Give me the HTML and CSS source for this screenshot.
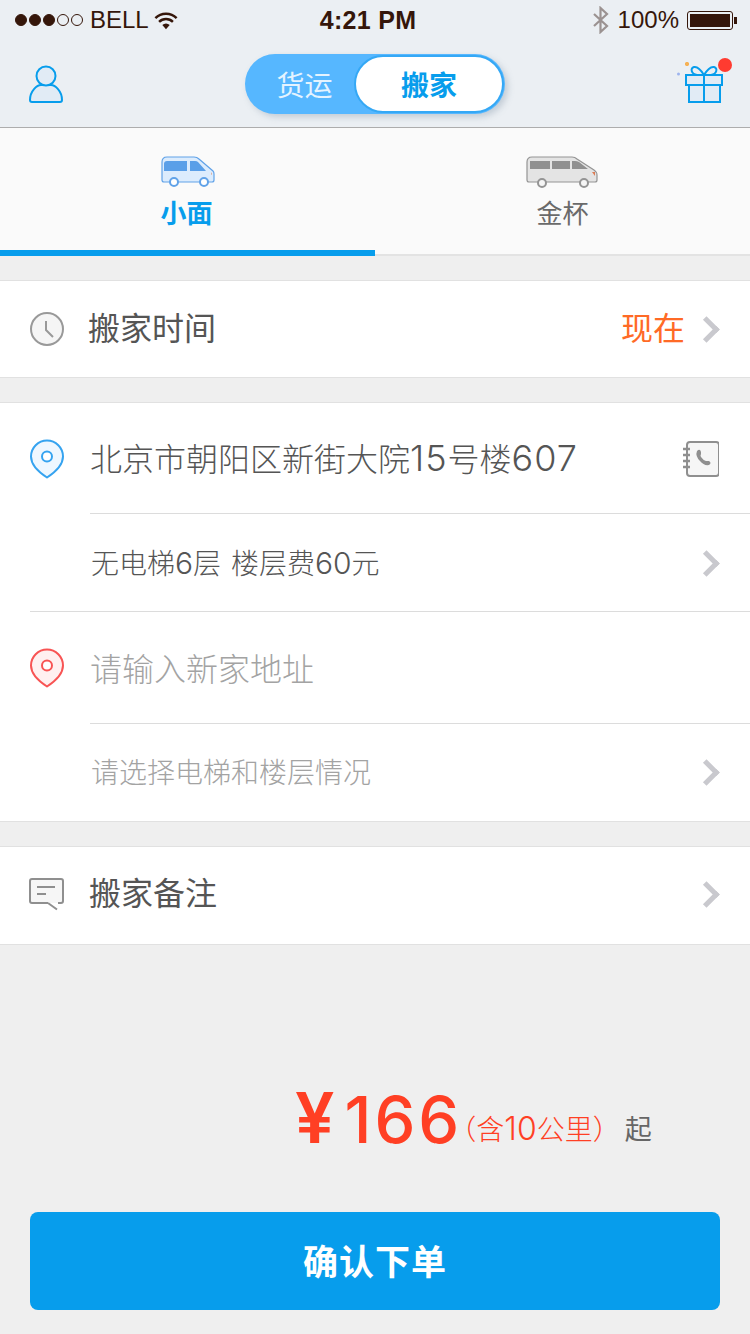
FILE: index.html
```html
<!DOCTYPE html>
<html lang="zh-CN">
<head>
    <meta charset="UTF-8">
    <meta name="viewport" content="width=device-width, initial-scale=1.0">
    <title>搬家</title>
    <link rel="stylesheet" href="styles.css">
</head>
<body>

    <div class="status-bar">
        <div class="status-left">
            <span class="signal">
                <i class="dot on"></i><i class="dot on"></i><i class="dot on"></i><i class="dot"></i><i class="dot"></i>
            </span>
            <span>BELL</span>
            <svg class="wifi" width="24" height="19" viewBox="0 0 26 20">
                <path d="M1.500 7.500a16 16 0 0 1 23 0" fill="none" stroke="#35160a" stroke-width="2.600"/>
                <path d="M5.500 11.500a10.500 10.500 0 0 1 15 0" fill="none" stroke="#35160a" stroke-width="2.600"/>
                <path d="M9 15a5.500 5.500 0 0 1 8 0l-4 4.500z" fill="#35160a"/>
            </svg>
        </div>
        <div class="status-time">4:21 PM</div>
        <div class="status-right">
            <svg width="18" height="28" viewBox="0 0 18 28">
                <path d="M2 8l13 12-6.500 6V2L15 8 2 20" fill="none" stroke="#9b9291" stroke-width="2.200"/>
            </svg>
            <span>100%</span>
            <span class="battery"><i class="battery-fill"></i></span>
        </div>
    </div>

    <div class="nav">
        <svg width="36" height="40" viewBox="0 0 36 40">
            <path d="M4 38q-2 0-2-2c0-9 7-15 11-15h10c4 0 11 6 11 15q0 2-2 2z" fill="#e1ebf5" stroke="#079dec" stroke-width="2" stroke-linejoin="round"/>
            <circle cx="18" cy="12" r="9.500" fill="#e1ebf5" stroke="#079dec" stroke-width="2"/>
        </svg>
        <div class="switch">
            <span class="switch-off">货运</span>
            <span class="switch-on">搬家</span>
        </div>
        <div class="gift">
            <svg width="50" height="50" viewBox="0 0 50 50">
                <path d="M10 7h4M12 5v4" stroke="#f5b155" stroke-width="2.500"/>
                <circle cx="3.500" cy="17" r="1.500" fill="#9db4ee"/>
                <path d="M22 18c-6-1-7-7-3-8 3-.6 7 3 10 8 3-5 7-8.600 10-8 4 1 3 7-3 8" fill="none" stroke="#079dec" stroke-width="2"/>
                <rect x="11" y="18" width="36" height="10" fill="#e1ebf5" stroke="#079dec" stroke-width="2"/>
                <rect x="14" y="28" width="31" height="17" fill="#e1ebf5" stroke="#079dec" stroke-width="2"/>
                <path d="M29 18v27" stroke="#079dec" stroke-width="2"/>
            </svg>
            <i class="badge"></i>
        </div>
    </div>

    <div class="tabs">
        <div class="tab active">
            <svg width="54" height="32" viewBox="0 0 54 32">
                <path d="M1 6q0-5 5-5h27q3 0 5 2l14 12q1 1 1 3v6q0 2-2 2H3q-2 0-2-2z" fill="#dcecfd" stroke="#60a2e8" stroke-width="1.200"/>
                <path d="M3 8q0-3 3-3h20v10H3zM29 5h5q2 0 3 1l8 9H29z" fill="#5a9fe8"/>
                <path d="M50 16l1 2.500-.800 0z" fill="#e0764a"/>
                <circle cx="13" cy="26" r="4" fill="#fff" stroke="#60a2e8" stroke-width="2"/>
                <circle cx="43" cy="26" r="4" fill="#fff" stroke="#60a2e8" stroke-width="2"/>
            </svg>
            <span>小面</span>
        </div>
        <div class="tab">
            <svg class="van-long" width="72" height="32" viewBox="0 0 72 32">
                <path d="M1 6q0-5 5-5h40q3 0 5 2l17 11q3 2 3 5v5q0 2-2 2H3q-2 0-2-2z" fill="#e4e4e4" stroke="#949494" stroke-width="1.200"/>
                <path d="M4 5h20v8H4zM26 5h18v8H26zM46 5h3q2 0 4 1l9 7H46z" fill="#909090"/>
                <path d="M66 16l3 0 0 4z" fill="#dc7c54"/>
                <circle cx="16" cy="27" r="4" fill="#f5f5f5" stroke="#949494" stroke-width="2"/>
                <circle cx="58" cy="27" r="4" fill="#f5f5f5" stroke="#949494" stroke-width="2"/>
            </svg>
            <span>金杯</span>
        </div>
    </div>

    <div class="group">
        <div class="row row-time">
            <svg class="row-icon" width="36" height="36" viewBox="0 0 36 36">
                <circle cx="18" cy="18" r="16" fill="#f5f5f5" stroke="#999" stroke-width="2"/>
                <path d="M17 10v9l7 7" fill="none" stroke="#999" stroke-width="2"/>
            </svg>
            <span class="row-text big">搬家时间</span>
            <span class="now">现在</span>
            <i class="chevron"></i>
        </div>
    </div>

    <div class="group">
        <div class="row row-from line-inset">
            <svg class="row-icon" width="36" height="40" viewBox="0 0 36 40">
                <path d="M18 38.500C8 32 2 25 2 17.500a16 16 0 0 1 32 0C34 25 28 32 18 38.500z" fill="#eef7ff" stroke="#35a3f0" stroke-width="2" stroke-linejoin="round"/>
                <circle cx="18" cy="17.500" r="5" fill="#fff" stroke="#35a3f0" stroke-width="2"/>
            </svg>
            <span class="row-text address">北京市朝阳区新街大院<span class="num">15</span>号楼<span class="num">607</span></span>
            <svg class="book" width="36" height="36" viewBox="0 0 36 36">
                <rect x="4" y="1" width="32" height="34" rx="3" fill="#f6f6f6" stroke="#8f8f8f" stroke-width="2"/>
                <path d="M0 8h7M0 14h7M0 20h7M0 26h7" stroke="#8f8f8f" stroke-width="2.500"/>
                <path d="M14 10q3-3 4 1l0 2q-1 2 0 3 2 3 5 4 2 0 3 0 3 2 0 4-5 1-9-4-5-5-3-10z" fill="#8f8f8f"/>
            </svg>
        </div>
        <div class="row row-floor line-full">
            <span class="row-text floor">无电梯<span class="num">6</span>层 楼层费<span class="num">60</span>元</span>
            <i class="chevron"></i>
        </div>
        <div class="row row-to line-inset">
            <svg class="row-icon" width="36" height="40" viewBox="0 0 36 40">
                <path d="M18 38.500C8 32 2 25 2 17.500a16 16 0 0 1 32 0C34 25 28 32 18 38.500z" fill="#fff0f0" stroke="#f85454" stroke-width="2" stroke-linejoin="round"/>
                <circle cx="18" cy="17.500" r="5" fill="#fff" stroke="#f85454" stroke-width="2"/>
            </svg>
            <span class="row-text address muted">请输入新家地址</span>
        </div>
        <div class="row row-floor-last">
            <span class="row-text floor muted">请选择电梯和楼层情况</span>
            <i class="chevron"></i>
        </div>
    </div>

    <div class="group">
        <div class="row row-note">
            <svg class="row-icon" width="36" height="34" viewBox="0 0 36 34">
                <path d="M19 26H3q-2 0-2-2V4q0-2 2-2h29q2 0 2 2v20q0 2-2 2h-3" fill="#f6f6f6" stroke="#8f8f8f" stroke-width="2"/>
                <path d="M19 26l9 6.500" fill="none" stroke="#8f8f8f" stroke-width="2"/>
                <path d="M8 10h18M8 17h9" stroke="#8f8f8f" stroke-width="2"/>
            </svg>
            <span class="row-text big">搬家备注</span>
            <i class="chevron"></i>
        </div>
    </div>

    <div class="price"><span class="amount"><span class="yen">¥</span>166</span><span class="price-note">（含<span class="num">10</span>公里）</span><span class="price-from">起</span></div>

    <div class="confirm">确认下单</div>

</body>
</html>
```

FILE: styles.css
```css
* {
    box-sizing: border-box;
}
html, body {
    margin: 0;
    height: 1334px;
    overflow: hidden;
}
body {
    font-family: "Noto Sans CJK SC", "Noto Sans", sans-serif;
    background: #efefef;
    color: #555;
}
i {
    display: block;
}

.status-bar {
    height: 40px;
    padding: 0 15px;
    display: grid;
    grid-template-columns: 1fr auto 1fr;
    align-items: center;
    background: #ebeff3;
    color: #35160a;
    font-family: "Liberation Sans", sans-serif;
    font-size: 24px;
}
.status-left {
    display: flex;
    align-items: center;
    gap: 7px;
}
.wifi {
    margin-left: -2px;
}
.signal {
    display: flex;
    gap: 2px;
}
.dot {
    width: 12px;
    height: 12px;
    border: 1px solid #35160a;
    border-radius: 50%;
}
.dot.on {
    background: #35160a;
}
.status-time {
    margin-right: 14px;
    font-weight: bold;
    font-size: 25px;
    letter-spacing: 0.300px;
}
.status-right {
    display: flex;
    align-items: center;
    justify-content: flex-end;
    gap: 8px;
}
.battery {
    position: relative;
    width: 46px;
    height: 19px;
    padding: 2px;
    border: 1px solid #35160a;
    border-radius: 3px;
    margin-right: 2px;
}
.battery::after {
    content: "";
    position: absolute;
    right: -5px;
    top: 5px;
    width: 3px;
    height: 7px;
    background: #35160a;
}
.battery-fill {
    height: 100%;
    background: #35160a;
}

.nav {
    height: 88px;
    padding: 0 28px;
    display: flex;
    align-items: center;
    justify-content: space-between;
    background: #ebeff3;
    border-bottom: 1px solid #adadad;
}
.switch {
    width: 260px;
    height: 60px;
    padding: 1px;
    margin-left: 11px;
    display: flex;
    align-items: center;
    background: #56b7ff;
    border-radius: 30px;
    box-shadow: 3px 3px 6px rgba(120, 140, 160, 0.35);
    font-size: 28px;
}
.switch-off {
    width: 108px;
    padding-left: 9px;
    text-align: center;
    color: #e4f3ff;
}
.switch-on {
    flex: 1;
    height: 58px;
    line-height: 54px;
    text-align: center;
    color: #079dec;
    font-weight: bold;
    background: #fff;
    border: 2px solid #35a8f5;
    border-radius: 29px;
}
.gift {
    position: relative;
    width: 50px;
    height: 50px;
    margin-right: -3px;
    margin-bottom: 4px;
}
.badge {
    position: absolute;
    right: -7px;
    top: 1px;
    width: 14px;
    height: 14px;
    border-radius: 50%;
    background: #ff3b30;
}

.tabs {
    height: 128px;
    display: flex;
    background: #fafafa;
    border-bottom: 2px solid #e3e3e3;
}
.tab {
    position: relative;
    flex: 1;
    padding-top: 28px;
    display: flex;
    flex-direction: column;
    align-items: center;
    font-size: 26px;
    line-height: 36px;
    color: #6a6a6a;
}
.tab span {
    margin-top: 6px;
}
.van-long {
    margin-right: 2px;
}
.tab.active {
    color: #079dec;
    font-weight: bold;
}
.tab.active span {
    margin-right: 2px;
}
.tab.active::after {
    content: "";
    position: absolute;
    left: 0;
    right: 0;
    bottom: -2px;
    height: 6px;
    background: #079dec;
}

.group {
    margin-top: 24px;
    background: #fff;
    border-top: 1px solid #e1e1e1;
    border-bottom: 1px solid #e1e1e1;
}
.row {
    position: relative;
    display: flex;
    align-items: center;
    padding: 0 29px;
}
.row-time {
    height: 96px;
}
.row-from {
    height: 111px;
}
.row-floor {
    height: 98px;
}
.row-to {
    height: 112px;
}
.row-floor-last {
    height: 97px;
}
.row-note {
    height: 97px;
    padding-bottom: 3px;
}
.line-inset::after, .line-full::after {
    content: "";
    position: absolute;
    right: 0;
    bottom: 0;
    height: 1px;
    background: #dcdcdc;
}
.line-inset::after {
    left: 90px;
}
.line-full::after {
    left: 30px;
}
.row-icon {
    flex: none;
    margin-right: 25px;
}
.row-text {
    flex: 1;
}
.big {
    margin-left: -2px;
    margin-bottom: 6px;
    font-size: 32px;
}
.row-note .big {
    margin-left: -1px;
}
.address {
    margin-bottom: 3px;
    font-family: Inter, "Noto Sans CJK SC", sans-serif;
    font-size: 32px;
    font-weight: 300;
}
.address .num {
    font-size: 36px;
    letter-spacing: 1px;
    line-height: 1;
}
.floor {
    margin-bottom: 3px;
    padding-left: 62px;
    font-family: Inter, "Noto Sans CJK SC", sans-serif;
    font-size: 28px;
    font-weight: 300;
    word-spacing: 2px;
}
.floor .num {
    font-size: 30px;
    line-height: 1;
}
.muted {
    color: #a3a3a3;
}
.now {
    margin-right: 14px;
    margin-bottom: 6px;
    font-size: 32px;
    color: #ff6a26;
}
.chevron {
    width: 15px;
    height: 15px;
    margin-right: 7px;
    border-top: 4px solid #c9c9ce;
    border-right: 4px solid #c9c9ce;
    transform: rotate(45deg) scale(1.250);
}
.book {
    flex: none;
    margin-right: 2px;
}

.price {
    margin-top: 141px;
    padding-left: 295px;
    height: 64px;
    line-height: 64px;
    white-space: nowrap;
    color: #ff3f24;
}
.amount {
    font-family: Inter, "Noto Sans", sans-serif;
    font-size: 65px;
    font-weight: 500;
    letter-spacing: 3px;
}
.yen {
    margin-right: 7px;
    font-size: 70px;
    font-weight: 600;
}
.price-note {
    vertical-align: 3px;
    font-family: Inter, "Noto Sans CJK SC", sans-serif;
    font-feature-settings: "halt";
    font-size: 28px;
    font-weight: 300;
}
.price-note .num {
    font-size: 32px;
    line-height: 1;
}
.price-from {
    margin-left: 18px;
    vertical-align: 4px;
    font-size: 27px;
    color: #666;
}

.confirm {
    margin: 62px 30px 0;
    height: 98px;
    line-height: 96px;
    text-align: center;
    font-size: 35px;
    font-weight: bold;
    letter-spacing: 1px;
    color: #fff;
    background: #079dec;
    border-radius: 8px;
}
```
